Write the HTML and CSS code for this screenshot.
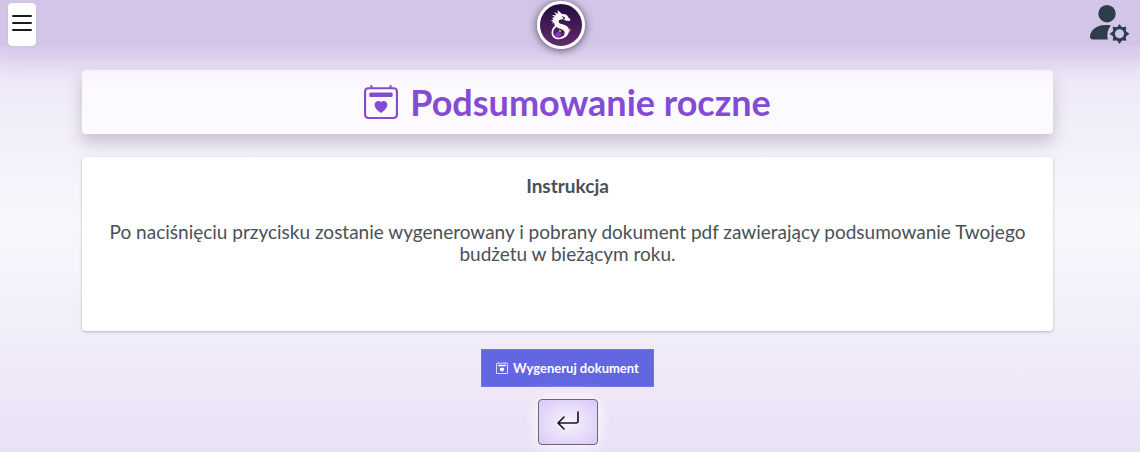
FILE: index.html
```html
<!DOCTYPE html>
<html lang="pl">
<head>
<meta charset="utf-8">
<meta name="viewport" content="width=device-width, initial-scale=1">
<title>Podsumowanie roczne</title>
<link rel="stylesheet" href="styles.css">
</head>
<body>
<svg class="defs" aria-hidden="true">
  <symbol id="calendar-heart" viewBox="0 0 16 16">
    <path d="M3.500 0a.5.5 0 0 1 .5.5V1h8V.5a.5.5 0 0 1 1 0V1h1a2 2 0 0 1 2 2v11a2 2 0 0 1-2 2H2a2 2 0 0 1-2-2V3a2 2 0 0 1 2-2h1V.5a.5.5 0 0 1 .5-.5M2 2a1 1 0 0 0-1 1v11a1 1 0 0 0 1 1h12a1 1 0 0 0 1-1V3a1 1 0 0 0-1-1z"/>
    <path d="M2.500 4.100c0-.3.250-.6.550-.6h9.900c.3 0 .550.300.550.600v1c0 .3-.250.550-.550.550h-9.900a.55.55 0 0 1-.550-.550z"/>
    <path d="M8 7.993c1.664-1.711 5.825 1.283 0 5.132-5.825-3.850-1.664-6.843 0-5.132"/>
  </symbol>
</svg>
<header class="topbar">
  <button class="menu-button" type="button" aria-label="Menu">
    <svg viewBox="0 0 20 20" fill="none" stroke="currentColor" stroke-width="2" stroke-linecap="round"><path d="M1 3h18M1 10h18M1 17h18"/></svg>
  </button>
  <a class="logo" href="#" aria-label="Strona główna">
    <svg viewBox="0 0 42 42">
      <path fill="#fff" d="M12 11l4.500.2L14 8l4 1.800L17.500 6l4.500 4c3-.3 5.500.8 6.500 3.500l2 2-1 1.500-3.200-.3-2.300-1.200c-3-.8-5.200.2-5.400 2-.2 1.800 2.200 2.300 4.600 3 4 1.200 6.100 3.200 5.800 6.700-.4 4-4 7.300-8.500 7.600 3-2.200 4.600-4.600 4.100-6.800-.6-2.300-3.800-2.900-6.800-4.200-2.700-1.200-3.900-3-3.500-5.300l-2.300.9 1.200-2.200-2.400-.2 2.700-1.800-1.700-1.500 3.200-.4z"/>
      <path fill="none" stroke="#fff" stroke-width="1.600" stroke-linecap="round" d="M15.500 22.500c-4 3-4.300 9.200-.2 11.200 2.700 1.200 5.700.9 8-.8"/>
      <path stroke="#411747" stroke-width="1" fill="none" d="M22 12.500l3 1.500-2 .8"/>
      <path fill="#8e35c7" d="M15.500 29.500l2.500-2 2.500 1.500 1 2-3 2.300-3.500-1.300z"/>
      <path fill="#efb957" d="M29.500 24.500l1.200 1.600-1.200 1.900-1.200-1.800zM19.500 25.500l1.500 1-.5 2-1.500-1z"/>
    </svg>
  </a>
  <button class="account-button" type="button" aria-label="Ustawienia konta">
    <svg viewBox="0 0 40 40" fill="currentColor">
      <circle cx="17" cy="8.700" r="8.700"/>
      <path d="M20.800 20.500A17 17 0 0 0 17.800 34.500H3C1 34.500 0 33.500 0 31.700c0-4.700 5-11.600 15-11.600 2.200 0 4.200.1 5.800.4z"/>
      <path fill-rule="evenodd" d="M27.900 22.300L29.500 20l1.600 2.300 1.700.7 2.800-.5-.5 2.800.7 1.700 2.700 1.800-2.700 1.800-.7 1.700.5 2.800-2.800-.5-1.700.7-1.600 2.700-1.600-2.700-1.700-.7-2.800.5.5-2.800-.7-1.700-2.700-1.800 2.700-1.800.7-1.700-.5-2.800 2.800.5zM24.300 28.800a5.200 5.200 0 1 0 10.400 0 5.200 5.200 0 1 0-10.400 0" stroke="currentColor" stroke-width="1.300" stroke-linejoin="round"/>
    </svg>
  </button>
</header>
<main class="content">
  <h1 class="title"><svg class="title-icon" aria-hidden="true"><use href="#calendar-heart"/></svg>Podsumowanie roczne</h1>
  <section class="card">
    <h2 class="card-heading">Instrukcja</h2>
    <p class="card-text">Po naciśnięciu przycisku zostanie wygenerowany i pobrany dokument pdf zawierający podsumowanie Twojego budżetu w bieżącym roku.</p>
  </section>
  <div class="actions">
    <button class="generate-button" type="button"><svg class="button-icon" aria-hidden="true"><use href="#calendar-heart"/></svg>Wygeneruj dokument</button>
    <a class="back-button" href="#" aria-label="Powrót">
      <svg viewBox="0 0 24 24" fill="none" stroke="currentColor" stroke-width="1.600" stroke-linecap="round" stroke-linejoin="round"><path d="M22 2v9a2 2 0 0 1-2 2H2M8 7l-6 6 6 6"/></svg>
    </a>
  </div>
</main>
</body>
</html>
```
FILE: styles.css
```css
* { box-sizing: border-box; }
body {
  margin: 0;
  min-height: 100vh;
  color: #495057;
  font-family: Lato, "Open Sans", sans-serif;
  background: linear-gradient(#e9e2f5, #f8f7fc 50%, #e9e1f6);
}
.defs { display: none; }
button { margin: 0; border: 0; font: inherit; cursor: pointer; }
.topbar {
  display: flex;
  justify-content: space-between;
  align-items: flex-start;
  height: 46px;
  padding: 0 10px 0 8px;
  background: #d3c5e8;
  box-shadow: 0 4px 24px 12px #d3c5e8;
}
.menu-button {
  width: 28px;
  height: 43px;
  margin-top: 3px;
  padding: 0 4px;
  border-radius: 4px;
  color: #181a1d;
  background: #fff;
  box-shadow: 0 0 1px #999;
}
.menu-button svg { display: block; width: 20px; height: 20px; margin-bottom: 4px; }
.logo {
  width: 48px;
  height: 48px;
  margin-top: 1px;
  border: 3px solid #fff;
  border-radius: 50%;
  background: linear-gradient(#210c3d, #632a70);
  box-shadow: 0 1px 8px #514760;
}
.logo svg { display: block; }
.account-button {
  width: 44px;
  margin-top: 5px;
  padding: 0 0 0 4px;
  color: #2e3c4b;
  background: none;
}
.account-button svg { display: block; }
.content {
  position: relative;
  padding: 24px 87px 0 82px;
}
.title {
  display: flex;
  align-items: center;
  justify-content: center;
  gap: 12px;
  margin: 0 0 23px;
  padding: 8px;
  border-radius: 4px;
  color: #844bd4;
  background: linear-gradient(#f6f3fb, #fcfaff 30%);
  box-shadow: 0 8px 16px #c5bfd0;
  font-size: 36px;
  line-height: 48px;
  font-weight: 700;
}
.title-icon { width: 34px; height: 34px; fill: currentColor; }
.card {
  min-height: 174px;
  padding: 18px 24px;
  border-radius: 4px;
  background: #fff;
  box-shadow: 0 1px 3px #b8b4c0;
  text-align: center;
  font-size: 19px;
  line-height: 22px;
}
.card-heading { margin: 0 0 24px; font-size: 19px; line-height: 22px; }
.card-text { margin: 0; }
.actions {
  display: flex;
  flex-direction: column;
  align-items: center;
  gap: 12px;
  padding: 18px 0 7px;
}
.generate-button {
  display: flex;
  align-items: center;
  gap: 5px;
  height: 38px;
  padding: 0 14px;
  color: #fff;
  background: #6366e1;
  border: 1px solid #7474e4;
  font-size: 13px;
  font-weight: 700;
}
.button-icon { width: 12px; height: 12px; fill: currentColor; }
.back-button {
  display: grid;
  place-items: center;
  width: 60px;
  height: 46px;
  border: 1px solid #6d6579;
  border-radius: 4px;
  color: #16181b;
  background: radial-gradient(#f7f3fe, #dac8f6);
  box-shadow: 0 0 16px #fff;
}
.back-button svg { width: 24px; height: 24px; }
```
